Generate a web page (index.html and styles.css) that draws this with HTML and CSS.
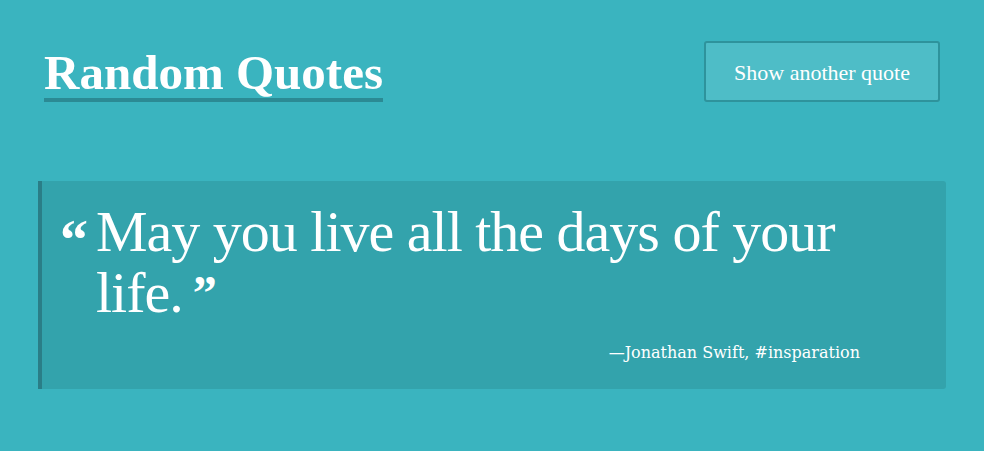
FILE: index.html
```html
<!DOCTYPE html>
<html lang="en">
<head>
<meta charset="utf-8">
<title>Random Quotes</title>
<link rel="stylesheet" href="styles.css">
</head>
<body>
<header class="header">
  <h1 class="title">Random Quotes</h1>
  <button class="btn" type="button">Show another quote</button>
</header>
<main class="quote-box">
  <span class="mark">&ldquo;</span>
  <div class="quote-body">
    <p class="quote-text">May you live all the days of your life.</p>
    <p class="attribution">&mdash;Jonathan Swift, #insparation</p>
  </div>
</main>
</body>
</html>
```
FILE: styles.css
```css
html, body {
  margin: 0;
  padding: 0;
}
body {
  background: #3ab4bf;
  color: #ffffff;
  font-family: "Liberation Serif", "DejaVu Serif", serif;
  width: 984px;
  height: 451px;
  overflow: hidden;
}
.header {
  display: flex;
  justify-content: space-between;
  align-items: flex-start;
  padding: 41px 44px 0 44px;
  height: 140px;
  box-sizing: border-box;
}
.title {
  margin: 7px 0 0 0;
  font-size: 49px;
  font-weight: 700;
  line-height: 50px;
  border-bottom: 4px solid #2b8a94;
  padding-bottom: 0;
}
.btn {
  width: 236px;
  height: 61px;
  background: #4ebdc7;
  border: 2px solid #2e939c;
  border-radius: 3px;
  color: #ffffff;
  font-family: inherit;
  font-size: 22px;
  padding: 3px 0 0 0;
}
.quote-box {
  margin: 41px 38px 0 38px;
  background: #33a3ac;
  border-left: 4px solid #2a7e87;
  border-radius: 0 3px 3px 0;
  height: 208px;
  box-sizing: border-box;
  display: flex;
  padding: 20px 40px 0 18px;
}
.mark {
  font-size: 56px;
  font-weight: 700;
  line-height: 56px;
  padding-top: 11px;
  width: 36px;
  flex: none;
}
.quote-body {
  flex: 1;
}
.quote-text {
  margin: 0;
  font-size: 58px;
  letter-spacing: -1px;
  line-height: 61px;
}
.quote-text::after {
  content: "\201D";
  font-weight: 700;
  font-size: 48px;
  line-height: 0;
  vertical-align: 3px;
  margin-left: 10px;
}
.attribution {
  margin: 20px 46px 0 0;
  text-align: right;
  font-family: "DejaVu Serif", serif;
  font-size: 16px;
}
```
